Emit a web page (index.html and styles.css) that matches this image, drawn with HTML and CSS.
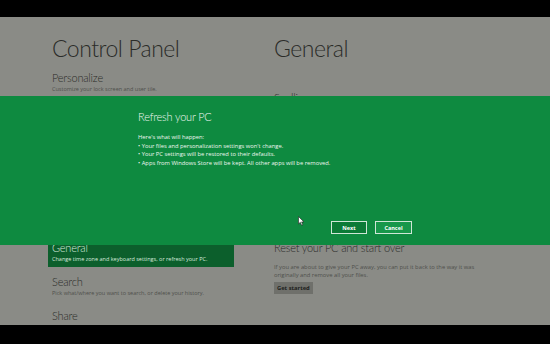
FILE: index.html
```html
<!DOCTYPE html>
<html lang="en">
<head>
    <meta charset="UTF-8">
    <title>Control Panel - General</title>
    <link rel="stylesheet" href="styles.css">
</head>
<body>
    <div class="screen">
        <div class="bar top"></div>

        <main class="panel">
            <!-- Left column: categories -->
            <section class="col col-left">
                <h1>Control Panel</h1>
                <ul class="menu">
                    <li class="item">
                        <div class="item-title">Personalize</div>
                        <div class="item-desc">Customize your lock screen and user tile.</div>
                    </li>
                    <li class="item">
                        <div class="item-title">Users</div>
                        <div class="item-desc">Change accounts.</div>
                    </li>
                    <li class="item">
                        <div class="item-title">Wireless</div>
                        <div class="item-desc">Turn devices on or off.</div>
                    </li>
                    <li class="item">
                        <div class="item-title">Notifications</div>
                        <div class="item-desc">Choose alerts.</div>
                    </li>
                    <li class="item">
                        <div class="item-title">Privacy</div>
                        <div class="item-desc">Location and info.</div>
                    </li>
                    <li class="item selected">
                        <div class="item-title">General</div>
                        <div class="item-desc">Change time zone and keyboard settings, or refresh your PC.</div>
                    </li>
                    <li class="item">
                        <div class="item-title">Search</div>
                        <div class="item-desc">Pick what/where you want to search, or delete your history.</div>
                    </li>
                    <li class="item">
                        <div class="item-title">Share</div>
                        <div class="item-desc">Pick which apps you want to share with, and how they work.</div>
                    </li>
                </ul>
            </section>

            <!-- Right column: general settings -->
            <section class="col col-right">
                <h1>General</h1>
                <div class="setting first">
                    <div class="setting-title">Spelling</div>
                </div>
                <div class="setting reset">
                    <div class="setting-title">Reset your PC and start over</div>
                    <div class="setting-desc">If you are about to give your PC away, you can put it back to the way it was originally and remove all your files.</div>
                    <button class="btn-grey">Get started</button>
                </div>
            </section>
        </main>

        <div class="bar bottom"></div>

        <!-- Refresh dialog band -->
        <div class="dialog">
            <h2>Refresh your PC</h2>
            <div class="dialog-body">
                <p>Here's what will happen:</p>
                <p>&bull; Your files and personalization settings won't change.</p>
                <p>&bull; Your PC settings will be restored to their defaults.</p>
                <p>&bull; Apps from Windows Store will be kept. All other apps will be removed.</p>
            </div>
            <div class="actions">
                <button class="btn next">Next</button>
                <button class="btn cancel">Cancel</button>
            </div>
        </div>

        <svg class="cursor" width="7" height="10" viewBox="0 0 7 10">
            <path d="M0.5 0.5 L0.5 8 L2.3 6.3 L3.6 9.3 L4.8 8.8 L3.6 5.9 L6 5.9 Z" fill="#ffffff" stroke="#222" stroke-width="0.6"/>
        </svg>
    </div>
</body>
</html>
```

FILE: styles.css
```css
:root {
    --screen-bg: #000000;
    --panel-bg: #8a8b86;
    --text-dark: #2b2c29;
    --text-muted: #4f504c;
    --band-green: #0e8a40;
    --tile-green: #0c5f2c;
    --band-text: #eef7f1;
}

body {
    margin: 0;
    background-color: var(--screen-bg);
    font-family: "Open Sans", "Liberation Sans", sans-serif;
    overflow: hidden;
}

.screen {
    position: relative;
    width: 550px;
    height: 344px;
}

.bar.top {
    height: 17px;
}

.bar.bottom {
    height: 19px;
}

.panel {
    height: 308px;
    background-color: var(--panel-bg);
    display: flex;
    gap: 40px;
    padding-left: 48px;
    overflow: hidden;
    box-sizing: border-box;
}

.col-left {
    width: 186px;
}

.col-right {
    width: 230px;
}

h1 {
    font-family: Lato, "Open Sans", sans-serif;
    font-weight: 300;
    font-size: 23px;
    letter-spacing: -0.5px;
    line-height: 28px;
    margin: 17px 0 0 4px;
    color: var(--text-dark);
}

.col-right h1 {
    margin-left: 0;
}

.menu {
    list-style: none;
    margin: 6px 0 0;
    padding: 0;
}

.item {
    padding: 2px 4px 4px;
    margin-bottom: 5px;
}

.item-title {
    font-family: Lato, "Open Sans", sans-serif;
    font-weight: 300;
    font-size: 11px;
    letter-spacing: -0.2px;
    line-height: 15px;
    color: var(--text-dark);
}

.item-desc {
    font-size: 5.5px;
    line-height: 8px;
    color: var(--text-muted);
    white-space: nowrap;
}

.item.selected {
    background-color: var(--tile-green);
}

.item.selected .item-title,
.item.selected .item-desc {
    color: #d6eadc;
}

.setting.first {
    margin-top: 28px;
}

.setting.reset {
    margin-top: 135px;
}

.setting-title {
    font-family: Lato, "Open Sans", sans-serif;
    font-weight: 300;
    font-size: 11px;
    letter-spacing: -0.2px;
    line-height: 15px;
    color: var(--text-dark);
}

.setting-desc {
    font-size: 5.8px;
    line-height: 8px;
    color: var(--text-muted);
    margin-top: 8px;
    width: 205px;
}

.btn-grey {
    display: block;
    margin-top: 3px;
    height: 12px;
    padding: 0 3px;
    border: none;
    background-color: #6f706b;
    color: #1e1f1d;
    font-family: "Open Sans", "Liberation Sans", sans-serif;
    font-size: 5.8px;
    font-weight: bold;
}

/* Refresh dialog band */
.dialog {
    position: absolute;
    top: 96px;
    left: 0;
    right: 0;
    height: 149px;
    box-sizing: border-box;
    padding: 13px 138px 11px;
    background-color: var(--band-green);
    color: var(--band-text);
    display: flex;
    flex-direction: column;
}

.dialog h2 {
    font-family: Lato, "Open Sans", sans-serif;
    font-weight: 300;
    font-size: 11px;
    letter-spacing: -0.2px;
    line-height: 16px;
    margin: 0;
}

.dialog-body {
    margin-top: 8px;
    font-size: 5.8px;
    line-height: 8.5px;
}

.dialog-body p {
    margin: 0;
}

.actions {
    margin-top: auto;
    display: flex;
    justify-content: flex-end;
    gap: 8px;
}

.btn {
    width: 36px;
    height: 13px;
    box-sizing: border-box;
    border: 1px solid #cfe6d7;
    color: #ffffff;
    font-family: "Open Sans", "Liberation Sans", sans-serif;
    font-size: 5.5px;
    font-weight: bold;
    padding: 0;
}

.btn.next {
    background-color: #0b7b37;
}

.btn.cancel {
    width: 37px;
    background-color: #17974a;
}

.cursor {
    position: absolute;
    left: 298px;
    top: 216px;
}
```
